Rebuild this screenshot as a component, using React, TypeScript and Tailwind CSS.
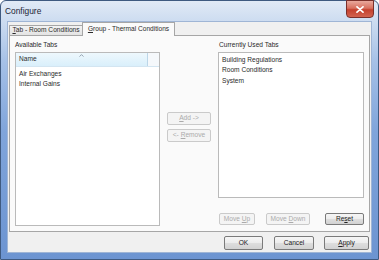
import React from "react";

function Btn({
  w,
  h,
  disabled,
  children,
}: {
  w: string;
  h: string;
  disabled?: boolean;
  children: React.ReactNode;
}) {
  return (
    <div
      className={
        "flex items-center justify-center rounded-[2px] border leading-none " +
        w +
        " " +
        h +
        " " +
        (disabled
          ? "border-[#cacaca] bg-[#f4f4f4] text-[#ababab]"
          : "border-[#7a7a7a] bg-[linear-gradient(to_bottom,#f6f6f6_0%,#ececec_50%,#dedede_50%,#d2d2d2_100%)] text-[#222]")
      }
    >
      {children}
    </div>
  );
}

const U = ({ children }: { children: React.ReactNode }) => (
  <span className="underline underline-offset-[1px]">{children}</span>
);

export default function App() {
  return (
    <div className="w-[379px] h-[260px] bg-white font-['Liberation_Sans',Arial,sans-serif] text-[6.6px] text-[#2a2a2a]">
      <div className="relative w-[379px] h-[260px] rounded-t-[6px] border border-[#3f5a80] bg-[linear-gradient(to_bottom,#e1eaf6_0px,#cbdbf0_22px,#a6c1e7_60px,#80a5db_130px,#6c94d1_100%)] flex flex-col">
        {/* title bar */}
        <div className="h-[20px] flex items-center pl-[4px] text-[8.4px] text-[#1c2636]">
          Configure
        </div>
        {/* close button */}
        <div className="absolute top-[-1px] right-[4px] w-[28px] h-[18px] rounded-b-[4px] border border-[#7a2f2a] bg-[linear-gradient(to_bottom,#e9a89c_0%,#d8705f_45%,#c4402d_55%,#d2634f_100%)] flex items-center justify-center">
          <svg width="8" height="7" viewBox="0 0 8 7">
            <path d="M1 0.8 L7 6.2 M7 0.8 L1 6.2" stroke="#ffffff" strokeWidth="1.7" strokeLinecap="round" />
          </svg>
        </div>
        {/* client */}
        <div className="mx-[6px] h-[232px] border border-[#9fb5d5] bg-[#f0f0f0] flex flex-col">
          {/* tab strip */}
          <div className="h-[13px] flex items-end pl-[1px]">
            <div className="w-[74px] h-[10px] border border-b-0 border-[#a6a6a6] rounded-t-[1px] bg-[linear-gradient(to_bottom,#f3f3f3,#e3e3e3)] flex items-center justify-center leading-none">
              <span>
                <U>T</U>ab - Room Conditions
              </span>
            </div>
            <div className="relative z-10 -ml-[1px] -mb-[1px] w-[93px] h-[14px] border border-b-0 border-[#a6a6a6] rounded-t-[1px] bg-[#fafafa] flex items-center justify-center leading-none">
              <span>
                <U>G</U>roup - Thermal Conditions
              </span>
            </div>
          </div>
          {/* tab page */}
          <div className="ml-[1px] w-[361px] h-[197px] border border-[#a6a6a6] bg-[#fafafa] flex">
            {/* left column */}
            <div className="ml-[5px] w-[145px] flex flex-col">
              <div className="h-[16px] pt-[4px] leading-[10px]">Available Tabs</div>
              <div className="h-[174px] border border-[#bababa] bg-white flex flex-col">
                <div className="h-[14px] flex border-b border-[#d3e5f1]">
                  <div className="relative w-[132px] border-r border-[#bcd6e8] bg-[linear-gradient(to_bottom,#eef8fd,#d9effb)] flex items-center pl-[3px] leading-none">
                    Name
                    <svg
                      className="absolute top-[1px] left-[63px]"
                      width="5"
                      height="3"
                      viewBox="0 0 5 3"
                    >
                      <path d="M0.5 2.6 L2.5 0.6 L4.5 2.6" fill="none" stroke="#8a9aa8" strokeWidth="0.9" />
                    </svg>
                  </div>
                  <div className="flex-1 bg-[#f5f8fb]" />
                </div>
                <div className="pt-[2px] pl-[3px] flex flex-col">
                  <div className="h-[10px] leading-[10px]">Air Exchanges</div>
                  <div className="h-[10px] leading-[10px]">Internal Gains</div>
                </div>
              </div>
            </div>
            {/* middle */}
            <div className="w-[58px] pl-[7px] pt-[76px] flex flex-col gap-[4px]">
              <Btn w="w-[44px]" h="h-[13px]" disabled>
                <span>
                  <U>A</U>dd -&gt;
                </span>
              </Btn>
              <Btn w="w-[44px]" h="h-[13px]" disabled>
                <span>
                  &lt;- <U>R</U>emove
                </span>
              </Btn>
            </div>
            {/* right column */}
            <div className="w-[146px] flex flex-col">
              <div className="h-[16px] pt-[4px] pl-[1px] leading-[10px]">Currently Used Tabs</div>
              <div className="h-[146px] border border-[#bababa] bg-white pt-[2px] pl-[3px] flex flex-col">
                <div className="h-[10px] leading-[10px]">Building Regulations</div>
                <div className="h-[10px] leading-[10px]">Room Conditions</div>
                <div className="h-[11px] leading-[11px]">System</div>
              </div>
              <div className="mt-[15px] flex">
                <div className="ml-[1px]">
                  <Btn w="w-[36px]" h="h-[12px]" disabled>
                    <span>
                      Move <U>U</U>p
                    </span>
                  </Btn>
                </div>
                <div className="ml-[11px]">
                  <Btn w="w-[44px]" h="h-[12px]" disabled>
                    <span>
                      Move <U>D</U>own
                    </span>
                  </Btn>
                </div>
                <div className="ml-[15px]">
                  <Btn w="w-[39px]" h="h-[12px]">
                    <span>
                      Re<U>s</U>et
                    </span>
                  </Btn>
                </div>
              </div>
            </div>
          </div>
          {/* bottom buttons */}
          <div className="mt-[4px] flex justify-end pr-[2px]">
            <Btn w="w-[39px]" h="h-[14px]">
              OK
            </Btn>
            <div className="ml-[11px]">
              <Btn w="w-[40px]" h="h-[14px]">
                Cancel
              </Btn>
            </div>
            <div className="ml-[10px]">
              <Btn w="w-[45px]" h="h-[14px]">
                <span>
                  <U>A</U>pply
                </span>
              </Btn>
            </div>
          </div>
        </div>
      </div>
    </div>
  );
}
